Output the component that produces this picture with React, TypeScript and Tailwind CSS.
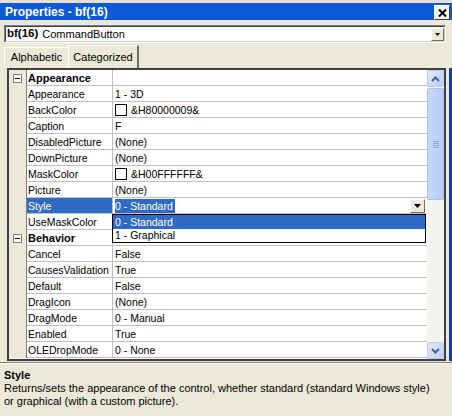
import { ReactNode } from 'react'

type Row =
  | { kind: 'cat'; name: string }
  | { kind: 'prop'; name: string; value: string; swatch?: boolean; selected?: boolean }

const rows: Row[] = [
  { kind: 'cat', name: 'Appearance' },
  { kind: 'prop', name: 'Appearance', value: '1 - 3D' },
  { kind: 'prop', name: 'BackColor', value: '&H80000009&', swatch: true },
  { kind: 'prop', name: 'Caption', value: 'F' },
  { kind: 'prop', name: 'DisabledPicture', value: '(None)' },
  { kind: 'prop', name: 'DownPicture', value: '(None)' },
  { kind: 'prop', name: 'MaskColor', value: '&H00FFFFFF&', swatch: true },
  { kind: 'prop', name: 'Picture', value: '(None)' },
  { kind: 'prop', name: 'Style', value: '0 - Standard', selected: true },
  { kind: 'prop', name: 'UseMaskColor', value: '' },
  { kind: 'cat', name: 'Behavior' },
  { kind: 'prop', name: 'Cancel', value: 'False' },
  { kind: 'prop', name: 'CausesValidation', value: 'True' },
  { kind: 'prop', name: 'Default', value: 'False' },
  { kind: 'prop', name: 'DragIcon', value: '(None)' },
  { kind: 'prop', name: 'DragMode', value: '0 - Manual' },
  { kind: 'prop', name: 'Enabled', value: 'True' },
  { kind: 'prop', name: 'OLEDropMode', value: '0 - None' },
]

function DownTriangle() {
  return (
    <svg width="7" height="4" viewBox="0 0 7 4">
      <path d="M0 0h7L3.5 4z" fill="#000" />
    </svg>
  )
}

function ScrollButton({ children }: { children: ReactNode }) {
  return (
    <div className="h-[17px] w-[17px] shrink-0 rounded-[2px] border border-[#b7cbf5] bg-gradient-to-br from-[#e3ebfd] to-[#bccdf7] flex items-center justify-center">
      {children}
    </div>
  )
}

function PropRow({ row }: { row: Row }) {
  if (row.kind === 'cat') {
    return (
      <div className="flex h-[16px]">
        <div className="w-[17px] shrink-0 bg-[#ece9d8] flex items-center justify-center">
          <div className="w-[9px] h-[9px] border border-[#808080] bg-white flex items-center justify-center">
            <div className="w-[5px] h-[1px] bg-black" />
          </div>
        </div>
        <div className="w-[1px] bg-[#808080]" />
        <div className="w-[85px] shrink-0 border-b border-[#c0c0c0] pl-[1px] pt-[1px] font-bold text-[11px] leading-[14px]">{row.name}</div>
        <div className="w-[1px] bg-[#c0c0c0]" />
        <div className="flex-1 border-b border-[#c0c0c0]" />
      </div>
    )
  }
  return (
    <div className="flex h-[16px]">
      <div className="w-[17px] shrink-0 bg-[#ece9d8]" />
      <div className="w-[1px] bg-[#808080]" />
      <div
        className={`w-[85px] shrink-0 border-b border-[#c0c0c0] pl-[1px] pt-[1px] leading-[14px] whitespace-nowrap overflow-hidden ${
          row.selected ? 'bg-[#316ac5] text-white' : ''
        }`}
      >
        {row.name}
      </div>
      <div className="w-[1px] bg-[#c0c0c0]" />
      <div className="flex-1 border-b border-[#c0c0c0] flex items-center pl-[2px] pt-[1px] leading-[14px] whitespace-nowrap">
        {row.swatch && <div className="w-[12px] h-[12px] border border-black bg-white mr-[4px] -mt-[1px]" />}
        {row.selected ? (
          <>
            <span className="bg-[#316ac5] text-white pr-[2px]">{row.value}</span>
            <div className="flex-1" />
            <div className="w-[15px] h-[14px] mr-[2px] -mt-[1px] bg-[#ece9d8] border border-t-white border-l-white border-r-[#716f64] border-b-[#716f64] flex items-center justify-center">
              <DownTriangle />
            </div>
          </>
        ) : (
          row.value
        )}
      </div>
    </div>
  )
}

export default function App() {
  return (
    <div
      className="w-[452px] h-[416px] bg-[#ece9d8] overflow-hidden flex flex-col text-[10.5px] text-black"
      style={{ fontFamily: '"Liberation Sans", Arial, sans-serif' }}
    >
      <div className="h-[3px] bg-[#e4e1d2]" />
      <div className="h-[17px] bg-[#0a5ad6] flex items-center pl-[5px] pr-[2px]">
        <span className="text-white font-bold text-[12px] leading-none mt-[1px]">Properties - bf(16)</span>
        <div className="flex-1" />
        <div className="w-[16px] h-[15px] bg-[#f4f3ee] border border-t-white border-l-white border-r-[#404040] border-b-[#404040] flex items-center justify-center mt-[2px]">
          <svg width="9" height="8" viewBox="0 0 9 8">
            <path d="M1 0.5l7 7M8 0.5l-7 7" stroke="#000" strokeWidth="2" />
          </svg>
        </div>
      </div>

      <div className="h-[5px]" />
      <div className="mx-[4px] mr-[6px] h-[18px] border border-t-[#808080] border-l-[#808080] border-r-white border-b-white">
        <div className="h-full bg-white border border-t-[#404040] border-l-[#404040] border-r-[#d4d0c8] border-b-[#d4d0c8] flex items-center pl-[1px]">
          <span className="font-bold text-[11.5px]">bf(16)</span>
          <span className="ml-[4px] text-[11px]">CommandButton</span>
          <div className="flex-1" />
          <div className="w-[13px] h-[13px] bg-[#ece9d8] border border-t-white border-l-white border-r-[#716f64] border-b-[#716f64] flex items-center justify-center">
            <svg width="5" height="3" viewBox="0 0 5 3">
              <path d="M0 0h5L2.5 3z" fill="#000" />
            </svg>
          </div>
        </div>
      </div>

      <div className="h-[2px]" />
      <div className="h-[23px] flex items-end pl-[4px]">
        <div className="h-[20px] w-[64px] border-t border-l border-white flex items-center justify-center text-[11px] mb-[1px]">
          Alphabetic
        </div>
        <div className="h-[23px] w-[71px] border-t border-l border-white border-r-2 border-r-[#716f64] flex items-start pt-[3px] justify-center text-[11px] relative">
          Categorized
        </div>
      </div>

      <div className="flex">
        <div className="ml-[7px] w-[439px] h-[293px] border-2 border-[#404040] flex bg-white">
          <div className="flex-1 relative">
            {rows.map((r, i) => (
              <PropRow key={i} row={r} />
            ))}
            <div className="absolute left-[103px] top-[144px] w-[314px] h-[29px] border border-black bg-white">
              <div className="h-[14px] bg-[#316ac5] text-white pl-[2px] leading-[14px]">0 - Standard</div>
              <div className="h-[13px] pl-[2px] leading-[13px]">1 - Graphical</div>
            </div>
          </div>
          <div className="w-[17px] bg-[#f5f4ef] flex flex-col">
            <ScrollButton>
              <svg width="9" height="6" viewBox="0 0 9 6">
                <path d="M1 5l3.5-3.5L8 5" stroke="#4d6185" strokeWidth="2" fill="none" />
              </svg>
            </ScrollButton>
            <div className="h-[112px] mt-[1px] rounded-[2px] border border-[#a9c0ef] bg-gradient-to-r from-[#c9d8fc] to-[#b9cdf8] flex flex-col items-center justify-center gap-[1px]">
              <div className="w-[6px] h-[1px] bg-[#8aa5dc]" />
              <div className="w-[6px] h-[1px] bg-[#8aa5dc]" />
              <div className="w-[6px] h-[1px] bg-[#8aa5dc]" />
              <div className="w-[6px] h-[1px] bg-[#8aa5dc]" />
            </div>
            <div className="flex-1" />
            <ScrollButton>
              <svg width="9" height="6" viewBox="0 0 9 6">
                <path d="M1 1l3.5 3.5L8 1" stroke="#4d6185" strokeWidth="2" fill="none" />
              </svg>
            </ScrollButton>
          </div>
        </div>
        <div className="w-[3px]" />
        <div className="w-[3px] bg-[#0a3fb0]" />
      </div>

      <div className="h-[1px] bg-[#808080] mt-[1px]" />
      <div className="h-[1px] bg-white" />
      <div className="pl-[4px] pt-[5px] text-[11px] leading-[13px]">
        <div className="font-bold">Style</div>
        <div>Returns/sets the appearance of the control, whether standard (standard Windows style)</div>
        <div>or graphical (with a custom picture).</div>
      </div>
    </div>
  )
}
